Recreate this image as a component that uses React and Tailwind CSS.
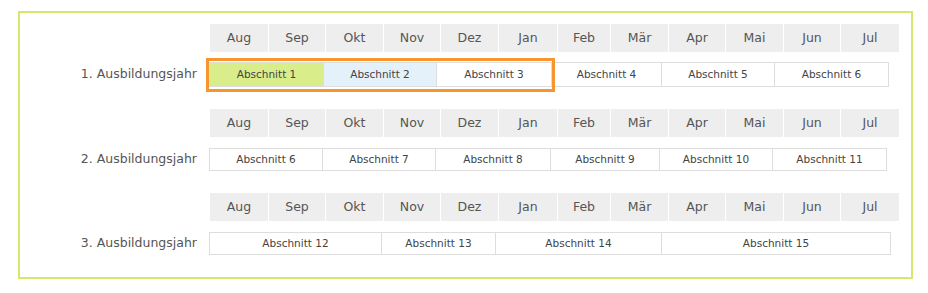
const months = [
  ['Aug', 'w-[58px]'],
  ['Sep', 'w-[56px]'],
  ['Okt', 'w-[57px]'],
  ['Nov', 'w-[56px]'],
  ['Dez', 'w-[57px]'],
  ['Jan', 'w-[58px]'],
  ['Feb', 'w-[52px]'],
  ['Mär', 'w-[57px]'],
  ['Apr', 'w-[56px]'],
  ['Mai', 'w-[57px]'],
  ['Jun', 'w-[56px]'],
  ['Jul', 'w-[58px]'],
]

const years = [
  {
    label: '1. Ausbildungsjahr',
    rowHeight: 'h-[25px]',
    gap: 'mt-[10px]',
    highlight: true,
    sections: [
      { name: 'Abschnitt 1', w: 'w-[113px]', bg: 'bg-[#d9ed8b]' },
      { name: 'Abschnitt 2', w: 'w-[113px]', bg: 'bg-[#e4f1fa]' },
      { name: 'Abschnitt 3', w: 'w-[115px]' },
      { name: 'Abschnitt 4', w: 'w-[110px]' },
      { name: 'Abschnitt 5', w: 'w-[113px]' },
      { name: 'Abschnitt 6', w: 'w-[114px]' },
    ],
  },
  {
    label: '2. Ausbildungsjahr',
    rowHeight: 'h-[23px]',
    gap: 'mt-[11px]',
    sections: [
      { name: 'Abschnitt 6', w: 'w-[112px]' },
      { name: 'Abschnitt 7', w: 'w-[113px]' },
      { name: 'Abschnitt 8', w: 'w-[115px]' },
      { name: 'Abschnitt 9', w: 'w-[109px]' },
      { name: 'Abschnitt 10', w: 'w-[113px]' },
      { name: 'Abschnitt 11', w: 'w-[114px]' },
    ],
  },
  {
    label: '3. Ausbildungsjahr',
    rowHeight: 'h-[23px]',
    gap: 'mt-[11px]',
    sections: [
      { name: 'Abschnitt 12', w: 'w-[171px]' },
      { name: 'Abschnitt 13', w: 'w-[114px]' },
      { name: 'Abschnitt 14', w: 'w-[166px]' },
      { name: 'Abschnitt 15', w: 'w-[229px]' },
    ],
  },
]

function MonthRow() {
  return (
    <div className="flex gap-px ml-px">
      {months.map(([m, w]) => (
        <div key={m} className={`${w} h-[28px] bg-[#eeeeee] flex items-center justify-center text-[12.5px] text-[#555]`}>
          {m}
        </div>
      ))}
    </div>
  )
}

function YearBlock({ year, first }) {
  return (
    <div className={first ? '' : 'mt-[22px]'}>
      <div className="grid grid-cols-[177px_auto] gap-x-[12px]">
        <div />
        <MonthRow />
      </div>
      <div className={`grid grid-cols-[177px_auto] gap-x-[12px] items-center ${year.gap}`}>
        <div className="text-right text-[12.5px] text-[#555]">{year.label}</div>
        <div className="relative w-fit">
          <div className={`flex ${year.rowHeight} border border-[#dddddd] w-fit`}>
            {year.sections.map((s, i) => (
              <div
                key={s.name}
                className={`${s.w} ${s.bg || 'bg-white'} ${i > 0 ? 'border-l border-[#dddddd]' : ''} flex items-center justify-center text-[10.5px] text-[#444]`}
              >
                {s.name}
              </div>
            ))}
          </div>
          {year.highlight && (
            <div className="absolute -left-[3px] -top-[4px] w-[349px] h-[34px] border-[3px] border-[#f7962f]" />
          )}
        </div>
      </div>
    </div>
  )
}

export default function App() {
  return (
    <div className="w-[928px] h-[293px] bg-white pt-[11px] pl-[18px]" style={{ fontFamily: '"DejaVu Sans", Verdana, sans-serif' }}>
      <div className="w-[895px] h-[268px] border-2 border-[#d4e86c] pt-[11px]">
        {years.map((y, i) => (
          <YearBlock key={y.label} year={y} first={i === 0} />
        ))}
      </div>
    </div>
  )
}
